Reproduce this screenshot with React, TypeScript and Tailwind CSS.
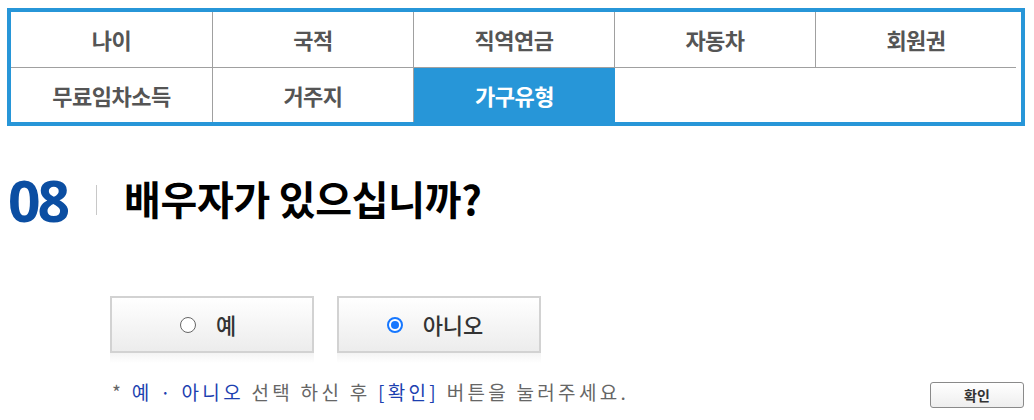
import React from "react";

const KR = { fontFamily: '"Noto Sans CJK KR", "Noto Sans", sans-serif' };

function Cell({ label, className }: { label?: string; className: string }) {
  return (
    <div className={`flex items-center justify-center text-[22px] font-bold tracking-[-0.5px] ${className}`}>
      {label}
    </div>
  );
}

function RadioBtn({ label, checked }: { label: string; checked?: boolean }) {
  return (
    <div className="flex flex-col">
      <div className="flex h-[57px] w-[204px] items-center justify-center gap-[20px] border-2 border-[#d2d2d2] bg-gradient-to-b from-[#ffffff] to-[#ececec] pr-[8px]">
        {checked ? (
          <span className="flex h-[16px] w-[16px] items-center justify-center rounded-full border-2 border-[#1677ff] bg-white">
            <span className="h-[8px] w-[8px] rounded-full bg-[#1677ff]" />
          </span>
        ) : (
          <span className="h-[16px] w-[16px] rounded-full border border-[#666] bg-white" />
        )}
        <span className="text-[22px] font-medium text-[#333]">{label}</span>
      </div>
      <div className="h-[10px] w-[204px] bg-gradient-to-b from-[#ececec] to-[#ffffff] opacity-60" />
    </div>
  );
}

export default function App() {
  return (
    <div className="relative h-[420px] w-[1034px] overflow-hidden bg-white" style={KR}>
      <div className="ml-[7px] mt-[8px] h-[118px] w-[1018px] border-4 border-[#2796d8] text-[#555]">
        <div className="flex h-[56px]">
          <Cell label="나이" className="w-[202px] border-b border-r border-[#a0a0a0]" />
          <Cell label="국적" className="w-[201px] border-b border-r border-[#a0a0a0]" />
          <Cell label="직역연금" className="w-[201px] border-b border-r border-[#a0a0a0]" />
          <Cell label="자동차" className="w-[201px] border-b border-r border-[#a0a0a0]" />
          <Cell label="회원권" className="w-[200px] border-b border-[#a0a0a0]" />
        </div>
        <div className="flex h-[54px]">
          <Cell label="무료임차소득" className="w-[202px] border-r border-[#a0a0a0]" />
          <Cell label="거주지" className="w-[201px] border-r border-[#a0a0a0]" />
          <Cell label="가구유형" className="w-[201px] bg-[#2796d8] text-white" />
        </div>
      </div>

      <div className="ml-[8px] mt-[44px] flex h-[60px] items-center">
        <span
          className="w-[64px] text-[57px] font-bold leading-none tracking-[-3px] text-[#0b4ea2]"
          style={{ fontFamily: '"Noto Sans", sans-serif' }}
        >
          08
        </span>
        <span className="ml-[24px] h-[30px] w-px bg-[#c8c8c8]" />
        <span className="ml-[27px] -mt-[4px] text-[40px] font-bold leading-none tracking-[-0.3px] text-black">
          배우자가 있으십니까?
        </span>
      </div>

      <div className="ml-[110px] mt-[66px] flex gap-[23px]">
        <RadioBtn label="예" />
        <RadioBtn label="아니오" checked />
      </div>

      <div className="ml-[112px] mt-[16px] flex items-start justify-between">
        <p className="text-[19px] leading-[26px] tracking-[3.3px] text-[#666]">
          * <span className="text-[#1c3fb0]">예 · 아니오</span> 선택 하신 후{" "}
          <span className="text-[#1c3fb0]">[확인]</span> 버튼을 눌러주세요.
        </p>
        <button className="mr-[10px] mt-[3px] flex h-[26px] w-[94px] items-center justify-center rounded-[3px] border border-[#8a8a8a] bg-gradient-to-b from-white to-[#eeeeee] text-[14px] font-bold text-[#333]">
          확인
        </button>
      </div>
    </div>
  );
}
